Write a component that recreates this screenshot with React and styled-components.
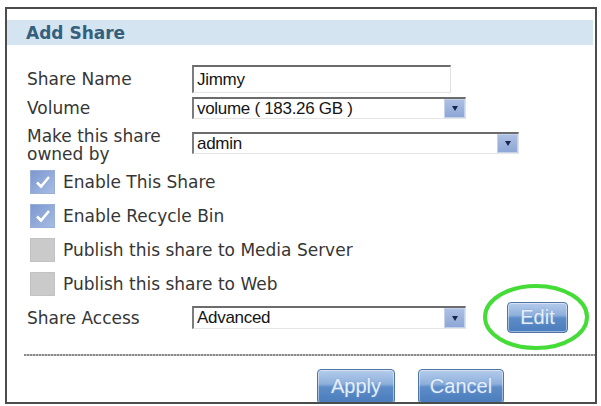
import styled, { createGlobalStyle } from "styled-components";

const GlobalStyle = createGlobalStyle`
  body {
    margin: 0;
    background: #fff;
    font-family: "DejaVu Sans", Verdana, sans-serif;
  }
`;

export default function App() {
  return (
    <>
      <GlobalStyle />
      <Frame>
        <Header>Add Share</Header>
        <Form>
          <Row $mt={20}>
            <Label>Share Name</Label>
            <Field $w={259} $h={28}>Jimmy</Field>
          </Row>
          <Row $mt={4}>
            <Label>Volume</Label>
            <Select width={274} height={22} value="volume ( 183.26 GB )" />
          </Row>
          <Row $mt={8} $top>
            <Label $wrap>Make this share owned by</Label>
            <SelectSpot>
              <Select width={327} height={22} value="admin" />
            </SelectSpot>
          </Row>
          <CheckRow $mt={7}>
            <Check checked />
            <span>Enable This Share</span>
          </CheckRow>
          <CheckRow>
            <Check checked />
            <span>Enable Recycle Bin</span>
          </CheckRow>
          <CheckRow>
            <Check />
            <span>Publish this share to Media Server</span>
          </CheckRow>
          <CheckRow>
            <Check />
            <span>Publish this share to Web</span>
          </CheckRow>
          <Row $mt={6}>
            <Label>Share Access</Label>
            <Select width={274} height={23} value="Advanced" />
            <EditSpot>
              <Button $w={61} $h={31}>Edit</Button>
              <Circle viewBox="0 0 110 70">
                <ellipse cx="55" cy="35" rx="51" ry="31" />
              </Circle>
            </EditSpot>
          </Row>
        </Form>
        <Separator />
        <Actions>
          <Button $w={78} $h={35}>Apply</Button>
          <Button $w={86} $h={35}>Cancel</Button>
        </Actions>
      </Frame>
    </>
  );
}

function Select({ width, height, value }) {
  return (
    <Field $w={width} $h={height}>
      {value}
      <Arrow>
        <i />
      </Arrow>
    </Field>
  );
}

function Check({ checked }) {
  return (
    <Box $on={checked}>
      {checked && (
        <svg width="16" height="14" viewBox="0 0 16 14">
          <path d="M2 7.5 L6 11.5 L14 2" fill="none" stroke="#fff" strokeWidth="2.6" />
        </svg>
      )}
    </Box>
  );
}

const Frame = styled.div`
  position: relative;
  box-sizing: border-box;
  width: 592px;
  height: 397px;
  margin: 7px 0 0 5px;
  border: 2px solid #4c4c4c;
  overflow: hidden;
  color: #363636;
`;

const Header = styled.div`
  display: flex;
  align-items: center;
  height: 25px;
  margin: 11px 2px 0 0;
  padding-left: 19px;
  background: #d5e4f1;
  color: #34607c;
  font-size: 17px;
  font-weight: 700;
`;

const Form = styled.div`
  padding-left: 20px;
`;

const Row = styled.div`
  display: flex;
  align-items: ${(p) => (p.$top ? "flex-start" : "center")};
  margin-top: ${(p) => p.$mt}px;
`;

const Label = styled.div`
  width: 165px;
  flex-shrink: 0;
  font-size: 17px;
  line-height: 18px;
  white-space: ${(p) => (p.$wrap ? "normal" : "nowrap")};
  padding-right: ${(p) => (p.$wrap ? "30px" : "0")};
  box-sizing: border-box;
`;

const SelectSpot = styled.div`
  margin-top: 5px;
`;

const Field = styled.div`
  position: relative;
  display: flex;
  align-items: center;
  box-sizing: border-box;
  width: ${(p) => p.$w}px;
  height: ${(p) => p.$h}px;
  padding-left: 3px;
  border-top: 2px solid #6c6c6c;
  border-left: 2px solid #7c7c7c;
  border-right: 1px solid #e0e0e0;
  border-bottom: 1px solid #e6e6e6;
  font-family: "Liberation Sans", Arial, sans-serif;
  font-size: 17px;
  color: #151515;
  letter-spacing: -0.3px;
`;

const Arrow = styled.span`
  margin-left: auto;
  align-self: stretch;
  width: 19px;
  display: flex;
  align-items: center;
  justify-content: center;
  background: linear-gradient(#adc0e4, #8ea7d7);
  border: 1px solid #c4d1ea;

  i {
    width: 0;
    height: 0;
    border-left: 3px solid transparent;
    border-right: 3px solid transparent;
    border-top: 5px solid #17264a;
  }
`;

const CheckRow = styled.div`
  display: flex;
  align-items: center;
  gap: 8px;
  height: 24px;
  margin-top: ${(p) => p.$mt ?? 10}px;
  padding-left: 3px;
  font-size: 17px;
  white-space: nowrap;
`;

const Box = styled.span`
  display: flex;
  align-items: center;
  justify-content: center;
  box-sizing: border-box;
  width: 25px;
  height: 24px;
  border: 1px solid ${(p) => (p.$on ? "#9aafd8" : "#c2c2c2")};
  background: ${(p) =>
    p.$on ? "linear-gradient(135deg, #7d98cf, #a7bce4)" : "#cacaca"};
`;

const EditSpot = styled.div`
  position: relative;
  margin-left: 41px;
`;

const Button = styled.div`
  display: flex;
  align-items: center;
  justify-content: center;
  box-sizing: border-box;
  width: ${(p) => p.$w}px;
  height: ${(p) => p.$h}px;
  border: 1px solid #4f74a6;
  border-radius: 4px;
  background: linear-gradient(#b4cceb 0%, #8fb0dc 42%, #5d8cc7 52%, #4a7cbc 100%);
  box-shadow: inset 0 0 0 1px rgba(255, 255, 255, 0.45);
  color: #e4eefa;
  font-family: "Liberation Sans", Arial, sans-serif;
  font-size: 20px;
  text-shadow: 0 0 2px #7ea3d2;
`;

const Circle = styled.svg`
  position: absolute;
  left: -26px;
  top: -20px;
  width: 110px;
  height: 70px;
  overflow: visible;
  pointer-events: none;

  ellipse {
    fill: none;
    stroke: #45dc38;
    stroke-width: 4;
  }
`;

const Separator = styled.div`
  height: 2px;
  margin: 21px 0 0 17px;
  background: repeating-linear-gradient(90deg, #8a8a8a 0 2px, #c4c4c4 2px 3px);
`;

const Actions = styled.div`
  display: flex;
  gap: 23px;
  margin-top: 13px;
  padding-left: 310px;
`;
